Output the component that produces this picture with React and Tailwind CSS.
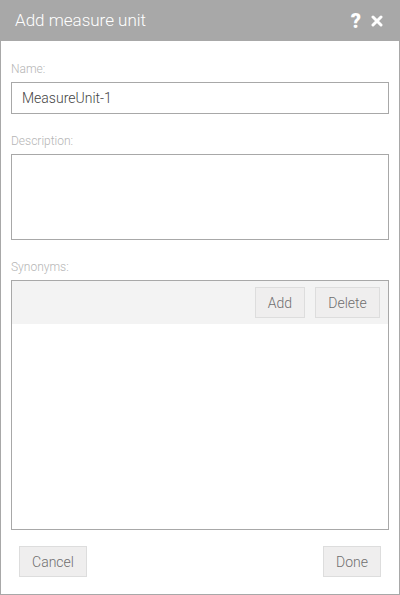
export default function App() {
  const btn =
    "h-[31px] border border-[#dddddd] bg-[#efeeee] text-[14px] font-light text-[#6f6f6f] leading-none";

  return (
    <div
      className="w-[400px] h-[595px] flex flex-col bg-white"
      style={{ fontFamily: "Roboto, 'Liberation Sans', sans-serif" }}
    >
      {/* Header */}
      <header className="h-[41px] shrink-0 bg-[#a8a8a8] flex items-center justify-between pl-[15px] pr-[17px]">
        <div className="text-[17px] font-light text-white">Add measure unit</div>
        <div className="flex items-center gap-[10px] text-white">
          <span className="text-[20px] font-black leading-none">?</span>
          <svg width="12" height="12" viewBox="0 0 12 12">
            <path d="M2 2 L10 10 M10 2 L2 10" stroke="white" strokeWidth="3" strokeLinecap="round" />
          </svg>
        </div>
      </header>

      {/* Body */}
      <div className="flex-1 flex flex-col border-x border-b border-[#a8a8a8] px-[10px]">
        <label className="mt-[21px] mb-[6px] h-[14px] text-[12px] leading-[14px] font-light text-[#b5b5b5]">
          Name:
        </label>
        <div className="h-[32px] border border-[#a8a8a8] flex items-center px-[10px] text-[14px] font-light text-[#444444]">
          MeasureUnit-1
        </div>

        <label className="mt-[20px] mb-[6px] h-[14px] text-[12px] leading-[14px] font-light text-[#b5b5b5]">
          Description:
        </label>
        <div className="h-[86px] border border-[#a8a8a8]" />

        <label className="mt-[20px] mb-[6px] h-[14px] text-[12px] leading-[14px] font-light text-[#b5b5b5]">
          Synonyms:
        </label>
        <div className="h-[250px] border border-[#a8a8a8] flex flex-col">
          <div className="h-[43px] bg-[#f3f3f3] flex items-center justify-end gap-[10px] pr-[8px]">
            <button className={btn + " w-[50px]"}>Add</button>
            <button className={btn + " w-[65px]"}>Delete</button>
          </div>
          <div className="flex-1" />
        </div>

        <div className="mt-[16px] flex justify-between px-[8px]">
          <button className={btn + " w-[68px]"}>Cancel</button>
          <button className={btn + " w-[58px]"}>Done</button>
        </div>
      </div>
    </div>
  );
}
